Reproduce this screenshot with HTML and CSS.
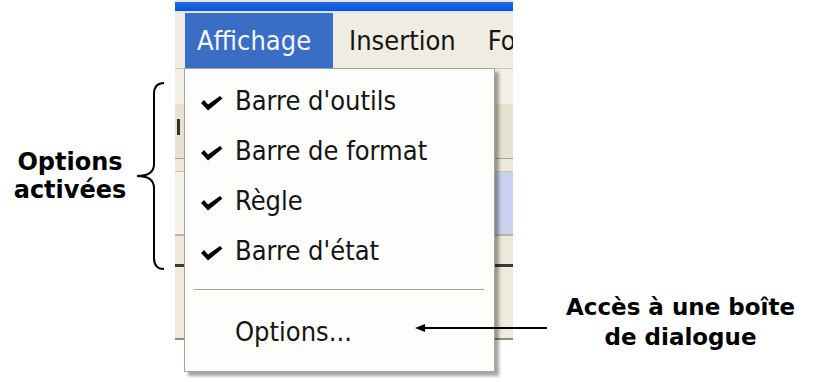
FILE: index.html
```html
<!DOCTYPE html>
<html lang="fr">
<head>
<meta charset="utf-8">
<title>Affichage</title>
<link rel="stylesheet" href="styles.css">
</head>
<body>
<div class="page">
  <div class="left">
    <div class="label label-left">Options<br>activées</div>
    <svg class="brace" width="30" height="192" viewBox="0 0 30 192">
      <path d="M29 3 C22 3 19 7 19 14 L19 84 C19 91 15 96 2 96 C15 96 19 101 19 108 L19 178 C19 185 22 189 29 189" fill="none" stroke="#000" stroke-width="2"/>
    </svg>
  </div>

  <div class="shot">
    <div class="titlebar"></div>
    <div class="menubar">
      <div class="menu-item active">Affichage</div>
      <div class="menu-item">Insertion</div>
      <div class="menu-item">Format</div>
    </div>
    <div class="toolbars">
      <div class="tb tb1"></div>
      <div class="tb tb2"><span class="grip"></span></div>
      <div class="tb tb3"></div>
      <div class="tb tb4"></div>
      <div class="tb tb5"></div>
      <div class="tb tb6"></div>
    </div>

    <div class="dropdown">
      <div class="item"><svg class="check" width="22" height="15" viewBox="0 0 22 15"><polygon points="0,7 3,4 7,8.5 19,0 21.5,2.5 7,14.5" fill="#000"/></svg><span>Barre d'outils</span></div>
      <div class="item"><svg class="check" width="22" height="15" viewBox="0 0 22 15"><polygon points="0,7 3,4 7,8.5 19,0 21.5,2.5 7,14.5" fill="#000"/></svg><span>Barre de format</span></div>
      <div class="item"><svg class="check" width="22" height="15" viewBox="0 0 22 15"><polygon points="0,7 3,4 7,8.5 19,0 21.5,2.5 7,14.5" fill="#000"/></svg><span>Règle</span></div>
      <div class="item"><svg class="check" width="22" height="15" viewBox="0 0 22 15"><polygon points="0,7 3,4 7,8.5 19,0 21.5,2.5 7,14.5" fill="#000"/></svg><span>Barre d'état</span></div>
      <div class="separator"></div>
      <div class="item options"><span>Options...</span></div>
    </div>
  </div>

  <div class="right">
    <div class="label label-right">Accès à une boîte<br>de dialogue</div>
  </div>

  <svg class="arrow" width="135" height="12" viewBox="0 0 135 12">
    <line x1="8" y1="6" x2="132" y2="6" stroke="#000" stroke-width="2"/>
    <polygon points="0,6 10,2 10,10" fill="#000"/>
  </svg>
</div>
</body>
</html>
```

FILE: styles.css
```css
html, body {
  margin: 0;
  padding: 0;
  background: #ffffff;
}

.page {
  position: relative;
  display: flex;
  width: 826px;
  height: 382px;
  overflow: hidden;
}

/* ---------- annotation labels ---------- */
.label {
  font-family: "DejaVu Sans", Verdana, sans-serif;
  font-weight: bold;
  color: #000;
  text-align: center;
}

.left {
  width: 175px;
  flex-shrink: 0;
  display: flex;
  align-items: flex-start;
}

.label-left {
  width: 130px;
  padding-left: 5px;
  margin-top: 148px;
  font-size: 24px;
  line-height: 28px;
}

.brace {
  margin-top: 80px;
  display: block;
}

.right {
  flex: 1;
  display: flex;
  justify-content: center;
  padding-left: 22px;
}

.label-right {
  margin-top: 292px;
  font-size: 23px;
  line-height: 30px;
}

.arrow {
  position: absolute;
  left: 415px;
  top: 322px;
}

/* ---------- screenshot ---------- */
.shot {
  position: relative;
  width: 338px;
  flex-shrink: 0;
  height: 340px;
  display: flex;
  flex-direction: column;
  background: #ECE9D8;
  font-family: "DejaVu Sans Condensed", "DejaVu Sans", Tahoma, sans-serif;
  font-stretch: condensed;
  font-size: 27px;
  color: #141414;
}

.titlebar {
  height: 9px;
  margin-top: 2px;
  background: linear-gradient(#1f67e6, #0a55d8);
  border-bottom: 2px solid #dfe6f3;
}

.menubar {
  height: 55px;
  display: flex;
  background: #EFEDE2;
  padding-left: 10px;
  overflow: hidden;
}

.menu-item {
  flex-shrink: 0;
  line-height: 55px;
  padding: 0 16px 0 16px;
  white-space: nowrap;
}

.menu-item.active {
  width: 120px;
  padding: 0 16px 0 12px;
  background: #3A6DC4;
  color: #f4f7ff;
}

.toolbars {
  flex: 1;
  display: flex;
  flex-direction: column;
}

.tb1 { height: 35px; background: #F2F0E6; border-top: 1px solid #cfcbbb; }
.tb2 { height: 54px; background: #E6E2D2; border-bottom: 1px solid #a9a595; position: relative; }
.tb3 { height: 12px; background: #EDEAD9; border-bottom: 1px solid #c7c3b3; }
.tb4 { height: 62px; background: linear-gradient(to right, #F3F1E8 0, #F3F1E8 12px, #C9D1EE 12px); border-bottom: 2px solid #b9b5a5; }
.tb5 { height: 28px; background: #ECE9D8; border-bottom: 3px solid #3a3a3a; }
.tb6 { flex: 1; background: #EEEBDD; border-bottom: 2px solid #8f8c80; }

.grip {
  position: absolute;
  left: 2px;
  top: 15px;
  width: 3px;
  height: 16px;
  background: #333;
}

.dropdown {
  position: absolute;
  left: 9px;
  top: 68px;
  width: 309px;
  height: 295px;
  box-sizing: content-box;
  border: 1px solid #A7A497;
  background: #FDFDFB;
  box-shadow: 4px 4px 3px rgba(0, 0, 0, 0.35);
  padding-top: 7px;
  display: flex;
  flex-direction: column;
}

.item {
  height: 50px;
  line-height: 50px;
  display: flex;
  align-items: flex-start;
  padding-left: 16px;
  white-space: nowrap;
}

.item span {
  display: block;
}

.check {
  display: block;
  margin-top: 20px;
  margin-right: 12px;
}

.item.options {
  padding-left: 50px;
}

.separator {
  height: 1px;
  margin: 13px 10px 16px 9px;
  background: #A5A298;
  border-bottom: 1px solid #ffffff;
}
```
